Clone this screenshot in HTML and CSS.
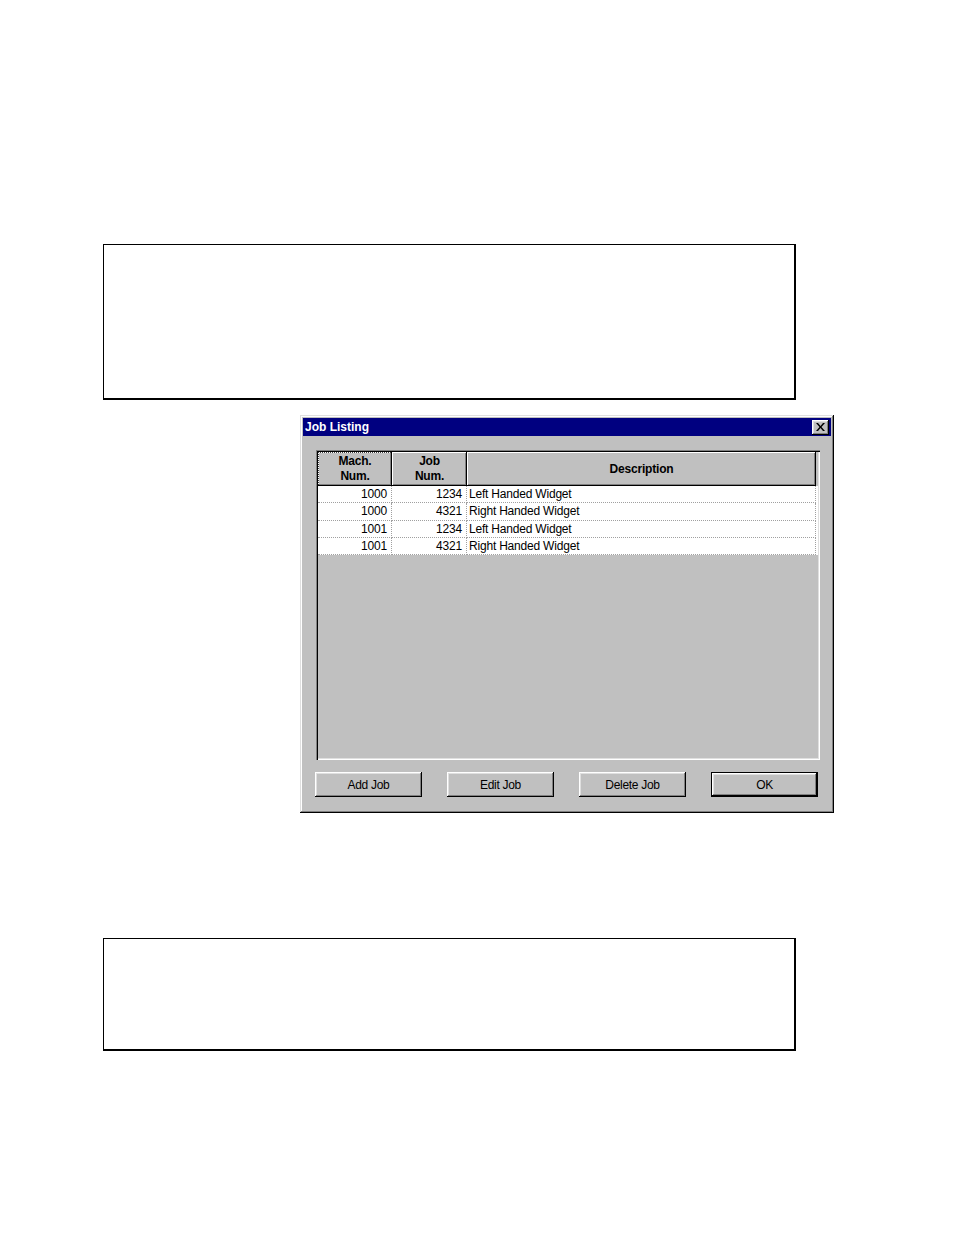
FILE: index.html
```html
<!DOCTYPE html>
<html>
<head>
<meta charset="utf-8">
<link rel="stylesheet" href="styles.css">
</head>
<body>
<div class="page">
  <div class="box box-top"></div>
  <div class="dialog">
    <div class="titlebar">
      <span class="title">Job Listing</span>
      <span class="close">
        <svg width="9" height="8" viewBox="0 0 9 8"><path d="M0 0h2l2.5 3 2.5-3h2l-3.5 4 3.5 4h-2l-2.5-3-2.5 3h-2l3.5-4z" fill="#000"/></svg>
      </span>
    </div>
    <div class="listview">
      <div class="header">
        <div class="hcell c1 focus"><span>Mach.<br>Num.</span></div>
        <div class="hcell c2"><span>Job<br>Num.</span></div>
        <div class="hcell c3"><span>Description</span></div>
      </div>
      <div class="row"><div class="cell c1 num">1000</div><div class="cell c2 num">1234</div><div class="cell c3">Left Handed Widget</div></div>
      <div class="row"><div class="cell c1 num">1000</div><div class="cell c2 num">4321</div><div class="cell c3">Right Handed Widget</div></div>
      <div class="row"><div class="cell c1 num">1001</div><div class="cell c2 num">1234</div><div class="cell c3">Left Handed Widget</div></div>
      <div class="row"><div class="cell c1 num">1001</div><div class="cell c2 num">4321</div><div class="cell c3">Right Handed Widget</div></div>
    </div>
    <div class="buttons">
      <div class="btn">Add Job</div>
      <div class="btn">Edit Job</div>
      <div class="btn">Delete Job</div>
      <div class="btn default">OK</div>
    </div>
  </div>
  <div class="box box-bottom"></div>
</div>
</body>
</html>
```
FILE: styles.css
```css
* { box-sizing: border-box; }
html, body { margin: 0; padding: 0; background: #fff; }
body { font-family: "Liberation Sans", Arial, sans-serif; font-size: 12px; color: #000; }
.page { padding-top: 244px; width: 954px; height: 1235px; }

.box {
  margin-left: 103px;
  width: 693px;
  border-top: 1px solid #000;
  border-left: 1px solid #000;
  border-right: 2px solid #000;
  border-bottom: 2px solid #000;
  background: #fff;
}
.box-top { height: 156px; }
.box-bottom { height: 113px; margin-top: 125px; }

.dialog {
  margin-top: 15px;
  margin-left: 300px;
  width: 534px;
  height: 398px;
  background: #c0c0c0;
  padding: 3px;
  box-shadow: inset -1px -1px 0 #000, inset 1px 1px 0 #dfdfdf, inset -2px -2px 0 #808080, inset 2px 2px 0 #fff;
  display: flex;
  flex-direction: column;
}
.titlebar {
  height: 18px;
  background: #000080;
  display: flex;
  align-items: center;
  justify-content: space-between;
  padding: 0 2px 0 2px;
}
.title { color: #fff; font-weight: bold; font-size: 12px; }
.close {
  width: 17px;
  height: 15px;
  background: #c0c0c0;
  box-shadow: inset -1px -1px 0 #000, inset 1px 1px 0 #fff, inset -2px -2px 0 #808080, inset 2px 2px 0 #dfdfdf;
  display: flex;
  align-items: center;
  justify-content: center;
  padding-bottom: 1px;
}
.close svg { display: block; }

.listview {
  margin: 14px 0 0 13px;
  width: 504px;
  height: 310px;
  padding: 2px;
  background: #c0c0c0;
  box-shadow: inset 1px 1px 0 #808080, inset 2px 2px 0 #000, inset -1px -1px 0 #fff, inset -2px -2px 0 #dfdfdf;
}
.header { display: flex; height: 34px; }
.c1 { width: 74px; }
.c2 { width: 75px; }
.c3 { width: 349px; }
.hcell {
  height: 34px;
  background: #c0c0c0;
  font-weight: bold;
  font-size: 12px;
  letter-spacing: -0.2px;
  line-height: 15px;
  text-align: center;
  display: flex;
  align-items: center;
  justify-content: center;
  box-shadow: inset -1px -1px 0 #000, inset 1px 1px 0 #fff, inset -2px -2px 0 #808080;
}
.hcell.focus { position: relative; }
.hcell.focus::after {
  content: "";
  position: absolute;
  left: 0; top: 0; right: 1px; bottom: 1px;
  border-left: 1px dotted #404040;
  border-top: 1px dotted #404040;
}
.row { display: flex; height: 17.25px; background: #fff; }
.cell {
  height: 17.25px;
  line-height: 16px;
  border-bottom: 1px dotted #a0a0a0;
  border-right: 1px dotted #a0a0a0;
  white-space: nowrap;
  padding: 0 2px;
  letter-spacing: -0.2px;
}
.cell.num { text-align: right; padding-right: 4px; }

.buttons {
  display: flex;
  justify-content: space-between;
  margin: 12px 0 0 12px;
  width: 503px;
}
.btn {
  width: 107px;
  height: 25px;
  background: #c0c0c0;
  display: flex;
  align-items: center;
  justify-content: center;
  font-size: 12px;
  letter-spacing: -0.3px;
  box-shadow: inset -1px -1px 0 #000, inset 1px 1px 0 #fff, inset -2px -2px 0 #808080, inset 2px 2px 0 #dfdfdf;
}
.btn.default {
  box-shadow: inset 0 0 0 1px #000, inset -2px -2px 0 #000, inset 2px 2px 0 #fff, inset -3px -3px 0 #808080, inset 3px 3px 0 #dfdfdf;
}
```
